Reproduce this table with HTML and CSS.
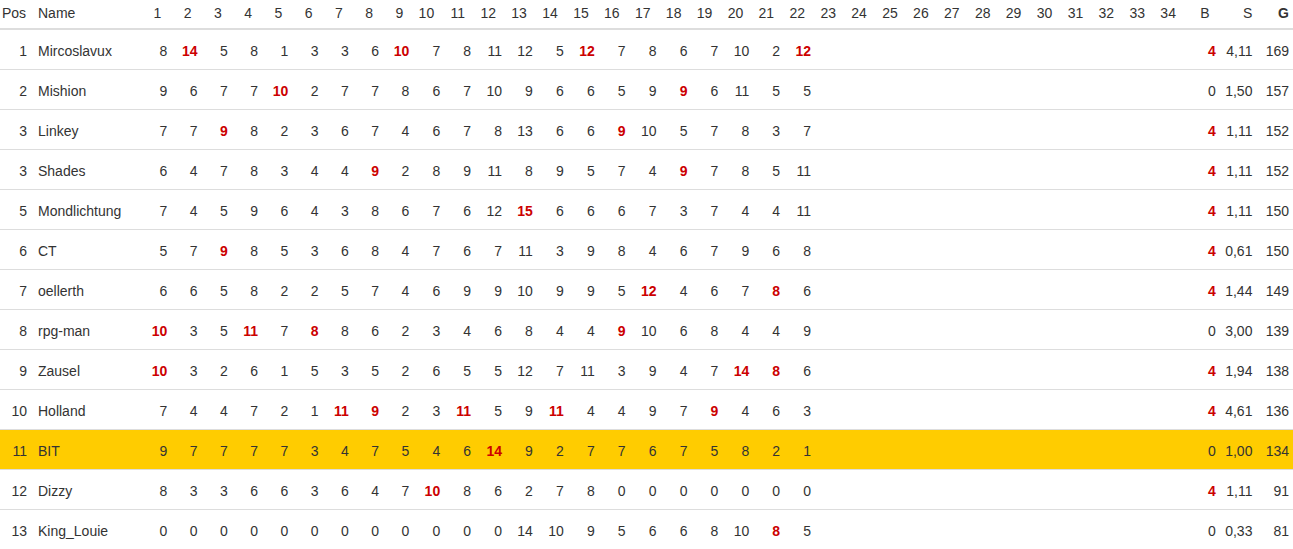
FILE: index.html
```html
<!DOCTYPE html>
<html lang="de">
<head>
<meta charset="utf-8">
<title>Tabelle</title>
<link rel="stylesheet" href="styles.css">
</head>
<body>
<table class="standings">
<colgroup>
<col class="c-pos"><col class="c-name">
<col class="c-s"><col class="c-s"><col class="c-s"><col class="c-s"><col class="c-s"><col class="c-s"><col class="c-s"><col class="c-s"><col class="c-s">
<col class="c-w"><col class="c-w"><col class="c-w"><col class="c-w"><col class="c-w"><col class="c-w"><col class="c-w"><col class="c-w"><col class="c-w"><col class="c-w"><col class="c-w"><col class="c-w"><col class="c-w"><col class="c-w"><col class="c-w"><col class="c-w"><col class="c-w"><col class="c-w"><col class="c-w"><col class="c-w"><col class="c-w"><col class="c-w"><col class="c-w"><col class="c-w"><col class="c-w">
<col class="c-b"><col class="c-st"><col class="c-g">
</colgroup>
<thead>
<tr>
<th class="pos">Pos</th><th class="name">Name</th>
<th>1</th><th>2</th><th>3</th><th>4</th><th>5</th><th>6</th><th>7</th><th>8</th><th>9</th><th>10</th><th>11</th><th>12</th><th>13</th><th>14</th><th>15</th><th>16</th><th>17</th><th>18</th><th>19</th><th>20</th><th>21</th><th>22</th><th>23</th><th>24</th><th>25</th><th>26</th><th>27</th><th>28</th><th>29</th><th>30</th><th>31</th><th>32</th><th>33</th><th>34</th>
<th>B</th><th class="tight">S</th><th class="tight strong">G</th>
</tr>
</thead>
<tbody>
<tr><td class="pos">1</td><td class="name">Mircoslavux</td><td>8</td><td class="hi">14</td><td>5</td><td>8</td><td>1</td><td>3</td><td>3</td><td>6</td><td class="hi">10</td><td>7</td><td>8</td><td>11</td><td>12</td><td>5</td><td class="hi">12</td><td>7</td><td>8</td><td>6</td><td>7</td><td>10</td><td>2</td><td class="hi">12</td><td></td><td></td><td></td><td></td><td></td><td></td><td></td><td></td><td></td><td></td><td></td><td></td><td class="hi">4</td><td>4,11</td><td>169</td></tr>
<tr><td class="pos">2</td><td class="name">Mishion</td><td>9</td><td>6</td><td>7</td><td>7</td><td class="hi">10</td><td>2</td><td>7</td><td>7</td><td>8</td><td>6</td><td>7</td><td>10</td><td>9</td><td>6</td><td>6</td><td>5</td><td>9</td><td class="hi">9</td><td>6</td><td>11</td><td>5</td><td>5</td><td></td><td></td><td></td><td></td><td></td><td></td><td></td><td></td><td></td><td></td><td></td><td></td><td>0</td><td>1,50</td><td>157</td></tr>
<tr><td class="pos">3</td><td class="name">Linkey</td><td>7</td><td>7</td><td class="hi">9</td><td>8</td><td>2</td><td>3</td><td>6</td><td>7</td><td>4</td><td>6</td><td>7</td><td>8</td><td>13</td><td>6</td><td>6</td><td class="hi">9</td><td>10</td><td>5</td><td>7</td><td>8</td><td>3</td><td>7</td><td></td><td></td><td></td><td></td><td></td><td></td><td></td><td></td><td></td><td></td><td></td><td></td><td class="hi">4</td><td>1,11</td><td>152</td></tr>
<tr><td class="pos">3</td><td class="name">Shades</td><td>6</td><td>4</td><td>7</td><td>8</td><td>3</td><td>4</td><td>4</td><td class="hi">9</td><td>2</td><td>8</td><td>9</td><td>11</td><td>8</td><td>9</td><td>5</td><td>7</td><td>4</td><td class="hi">9</td><td>7</td><td>8</td><td>5</td><td>11</td><td></td><td></td><td></td><td></td><td></td><td></td><td></td><td></td><td></td><td></td><td></td><td></td><td class="hi">4</td><td>1,11</td><td>152</td></tr>
<tr><td class="pos">5</td><td class="name">Mondlichtung</td><td>7</td><td>4</td><td>5</td><td>9</td><td>6</td><td>4</td><td>3</td><td>8</td><td>6</td><td>7</td><td>6</td><td>12</td><td class="hi">15</td><td>6</td><td>6</td><td>6</td><td>7</td><td>3</td><td>7</td><td>4</td><td>4</td><td>11</td><td></td><td></td><td></td><td></td><td></td><td></td><td></td><td></td><td></td><td></td><td></td><td></td><td class="hi">4</td><td>1,11</td><td>150</td></tr>
<tr><td class="pos">6</td><td class="name">CT</td><td>5</td><td>7</td><td class="hi">9</td><td>8</td><td>5</td><td>3</td><td>6</td><td>8</td><td>4</td><td>7</td><td>6</td><td>7</td><td>11</td><td>3</td><td>9</td><td>8</td><td>4</td><td>6</td><td>7</td><td>9</td><td>6</td><td>8</td><td></td><td></td><td></td><td></td><td></td><td></td><td></td><td></td><td></td><td></td><td></td><td></td><td class="hi">4</td><td>0,61</td><td>150</td></tr>
<tr><td class="pos">7</td><td class="name">oellerth</td><td>6</td><td>6</td><td>5</td><td>8</td><td>2</td><td>2</td><td>5</td><td>7</td><td>4</td><td>6</td><td>9</td><td>9</td><td>10</td><td>9</td><td>9</td><td>5</td><td class="hi">12</td><td>4</td><td>6</td><td>7</td><td class="hi">8</td><td>6</td><td></td><td></td><td></td><td></td><td></td><td></td><td></td><td></td><td></td><td></td><td></td><td></td><td class="hi">4</td><td>1,44</td><td>149</td></tr>
<tr><td class="pos">8</td><td class="name">rpg-man</td><td class="hi">10</td><td>3</td><td>5</td><td class="hi">11</td><td>7</td><td class="hi">8</td><td>8</td><td>6</td><td>2</td><td>3</td><td>4</td><td>6</td><td>8</td><td>4</td><td>4</td><td class="hi">9</td><td>10</td><td>6</td><td>8</td><td>4</td><td>4</td><td>9</td><td></td><td></td><td></td><td></td><td></td><td></td><td></td><td></td><td></td><td></td><td></td><td></td><td>0</td><td>3,00</td><td>139</td></tr>
<tr><td class="pos">9</td><td class="name">Zausel</td><td class="hi">10</td><td>3</td><td>2</td><td>6</td><td>1</td><td>5</td><td>3</td><td>5</td><td>2</td><td>6</td><td>5</td><td>5</td><td>12</td><td>7</td><td>11</td><td>3</td><td>9</td><td>4</td><td>7</td><td class="hi">14</td><td class="hi">8</td><td>6</td><td></td><td></td><td></td><td></td><td></td><td></td><td></td><td></td><td></td><td></td><td></td><td></td><td class="hi">4</td><td>1,94</td><td>138</td></tr>
<tr><td class="pos">10</td><td class="name">Holland</td><td>7</td><td>4</td><td>4</td><td>7</td><td>2</td><td>1</td><td class="hi">11</td><td class="hi">9</td><td>2</td><td>3</td><td class="hi">11</td><td>5</td><td>9</td><td class="hi">11</td><td>4</td><td>4</td><td>9</td><td>7</td><td class="hi">9</td><td>4</td><td>6</td><td>3</td><td></td><td></td><td></td><td></td><td></td><td></td><td></td><td></td><td></td><td></td><td></td><td></td><td class="hi">4</td><td>4,61</td><td>136</td></tr>
<tr class="me"><td class="pos">11</td><td class="name">BIT</td><td>9</td><td>7</td><td>7</td><td>7</td><td>7</td><td>3</td><td>4</td><td>7</td><td>5</td><td>4</td><td>6</td><td class="hi">14</td><td>9</td><td>2</td><td>7</td><td>7</td><td>6</td><td>7</td><td>5</td><td>8</td><td>2</td><td>1</td><td></td><td></td><td></td><td></td><td></td><td></td><td></td><td></td><td></td><td></td><td></td><td></td><td>0</td><td>1,00</td><td>134</td></tr>
<tr><td class="pos">12</td><td class="name">Dizzy</td><td>8</td><td>3</td><td>3</td><td>6</td><td>6</td><td>3</td><td>6</td><td>4</td><td>7</td><td class="hi">10</td><td>8</td><td>6</td><td>2</td><td>7</td><td>8</td><td>0</td><td>0</td><td>0</td><td>0</td><td>0</td><td>0</td><td>0</td><td></td><td></td><td></td><td></td><td></td><td></td><td></td><td></td><td></td><td></td><td></td><td></td><td class="hi">4</td><td>1,11</td><td>91</td></tr>
<tr><td class="pos">13</td><td class="name">King_Louie</td><td>0</td><td>0</td><td>0</td><td>0</td><td>0</td><td>0</td><td>0</td><td>0</td><td>0</td><td>0</td><td>0</td><td>0</td><td>14</td><td>10</td><td>9</td><td>5</td><td>6</td><td>6</td><td>8</td><td>10</td><td class="hi">8</td><td>5</td><td></td><td></td><td></td><td></td><td></td><td></td><td></td><td></td><td></td><td></td><td></td><td></td><td>0</td><td>0,33</td><td>81</td></tr>
</tbody>
</table>
</body>
</html>
```
FILE: styles.css
```css
html, body {
  margin: 0;
  padding: 0;
  background: #fff;
}

body {
  font-family: "Liberation Sans", Arial, Helvetica, sans-serif;
  font-size: 14px;
  line-height: 20px;
  color: #333;
}

.standings {
  width: 1293px;
  border-collapse: collapse;
  table-layout: fixed;
}

.c-pos { width: 34px; }
.c-name { width: 107px; }
.c-s { width: 30.25px; }
.c-w { width: 30.92px; }
.c-b { width: 33.75px; }
.c-st { width: 36.75px; }
.c-g { width: 36.25px; }

.standings th {
  font-weight: normal;
  text-align: right;
  white-space: nowrap;
  padding: 3px 10px 5px 0;
  border-bottom: 2px solid #ddd;
}

.standings th.pos {
  text-align: left;
  padding-left: 2px;
  padding-right: 0;
}

.standings th.name {
  text-align: left;
  padding-left: 4px;
  padding-right: 0;
}

.standings th.tight {
  padding-right: 4px;
}

.standings th.strong {
  font-weight: bold;
}

.standings td {
  text-align: right;
  white-space: nowrap;
  padding: 11px 4px 8px 0;
  border-top: 1px solid #ddd;
}

.standings tbody tr:first-child td {
  border-top: 0;
}

.standings td.pos {
  padding-right: 7px;
}

.standings td.name {
  text-align: left;
  padding-left: 4px;
}

.standings td.hi {
  color: #c00;
  font-weight: bold;
}

.standings tr.me td {
  background: #fc0;
}
```
